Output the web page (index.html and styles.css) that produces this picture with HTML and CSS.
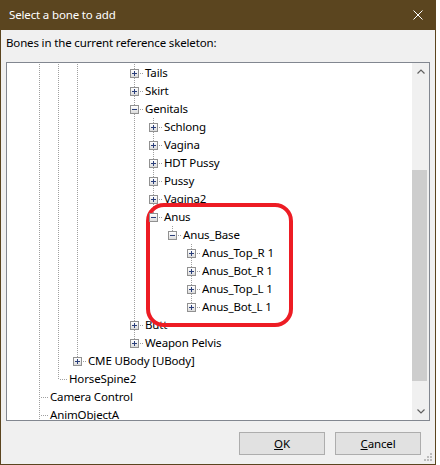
FILE: index.html
```html
<!DOCTYPE html>
<html lang="en">
<head>
  <meta charset="UTF-8">
  <title>Select a bone to add</title>
  <link rel="stylesheet" href="styles.css">
</head>
<body>
  <div class="dialog">
    <div class="titlebar">
      <span class="title">Select a bone to add</span>
      <span class="close">
        <svg width="10" height="10" viewBox="0 0 10 10"><path d="M0.5 0.5 L9.5 9.5 M9.5 0.5 L0.5 9.5" stroke="#fff" stroke-width="1" fill="none"/></svg>
      </span>
    </div>

    <div class="client">
      <div class="caption">Bones in the current reference skeleton:</div>

      <div class="tree">
        <div class="tree-rows">
          <!-- guides: one cell per ancestor level, "line" where that level still has siblings below -->
          <div class="row"><span class="guide line"></span><span class="guide line"></span><span class="guide line"></span><span class="guide"></span><span class="guide"></span><span class="node"><i class="box plus"></i></span><span class="label">Tails</span></div>
          <div class="row"><span class="guide line"></span><span class="guide line"></span><span class="guide line"></span><span class="guide"></span><span class="guide"></span><span class="node"><i class="box plus"></i></span><span class="label">Skirt</span></div>
          <div class="row"><span class="guide line"></span><span class="guide line"></span><span class="guide line"></span><span class="guide"></span><span class="guide"></span><span class="node"><i class="box"></i></span><span class="label">Genitals</span></div>
          <div class="row"><span class="guide line"></span><span class="guide line"></span><span class="guide line"></span><span class="guide"></span><span class="guide"></span><span class="guide line"></span><span class="node"><i class="box plus"></i></span><span class="label">Schlong</span></div>
          <div class="row"><span class="guide line"></span><span class="guide line"></span><span class="guide line"></span><span class="guide"></span><span class="guide"></span><span class="guide line"></span><span class="node"><i class="box plus"></i></span><span class="label">Vagina</span></div>
          <div class="row"><span class="guide line"></span><span class="guide line"></span><span class="guide line"></span><span class="guide"></span><span class="guide"></span><span class="guide line"></span><span class="node"><i class="box plus"></i></span><span class="label">HDT Pussy</span></div>
          <div class="row"><span class="guide line"></span><span class="guide line"></span><span class="guide line"></span><span class="guide"></span><span class="guide"></span><span class="guide line"></span><span class="node"><i class="box plus"></i></span><span class="label">Pussy</span></div>
          <div class="row"><span class="guide line"></span><span class="guide line"></span><span class="guide line"></span><span class="guide"></span><span class="guide"></span><span class="guide line"></span><span class="node"><i class="box plus"></i></span><span class="label">Vagina2</span></div>
          <div class="row"><span class="guide line"></span><span class="guide line"></span><span class="guide line"></span><span class="guide"></span><span class="guide"></span><span class="guide line"></span><span class="node last"><i class="box"></i></span><span class="label">Anus</span></div>
          <div class="row"><span class="guide line"></span><span class="guide line"></span><span class="guide line"></span><span class="guide"></span><span class="guide"></span><span class="guide line"></span><span class="guide"></span><span class="node last"><i class="box"></i></span><span class="label">Anus_Base</span></div>
          <div class="row"><span class="guide line"></span><span class="guide line"></span><span class="guide line"></span><span class="guide"></span><span class="guide"></span><span class="guide line"></span><span class="guide"></span><span class="guide"></span><span class="node"><i class="box plus"></i></span><span class="label">Anus_Top_R 1</span></div>
          <div class="row"><span class="guide line"></span><span class="guide line"></span><span class="guide line"></span><span class="guide"></span><span class="guide"></span><span class="guide line"></span><span class="guide"></span><span class="guide"></span><span class="node"><i class="box plus"></i></span><span class="label">Anus_Bot_R 1</span></div>
          <div class="row"><span class="guide line"></span><span class="guide line"></span><span class="guide line"></span><span class="guide"></span><span class="guide"></span><span class="guide line"></span><span class="guide"></span><span class="guide"></span><span class="node"><i class="box plus"></i></span><span class="label">Anus_Top_L 1</span></div>
          <div class="row"><span class="guide line"></span><span class="guide line"></span><span class="guide line"></span><span class="guide"></span><span class="guide"></span><span class="guide line"></span><span class="guide"></span><span class="guide"></span><span class="node last"><i class="box plus"></i></span><span class="label">Anus_Bot_L 1</span></div>
          <div class="row"><span class="guide line"></span><span class="guide line"></span><span class="guide line"></span><span class="guide"></span><span class="guide"></span><span class="node"><i class="box plus"></i></span><span class="label">Butt</span></div>
          <div class="row"><span class="guide line"></span><span class="guide line"></span><span class="guide line"></span><span class="guide"></span><span class="guide"></span><span class="node last"><i class="box plus"></i></span><span class="label">Weapon Pelvis</span></div>
          <div class="row"><span class="guide line"></span><span class="guide line"></span><span class="node last"><i class="box plus"></i></span><span class="label">CME UBody [UBody]</span></div>
          <div class="row"><span class="guide line"></span><span class="node last"></span><span class="label">HorseSpine2</span></div>
          <div class="row"><span class="node"></span><span class="label">Camera Control</span></div>
          <div class="row"><span class="node"></span><span class="label">AnimObjectA</span></div>
        </div>

        <div class="scrollbar">
          <div class="sb-btn">
            <svg width="8" height="5" viewBox="0 0 8 5"><path d="M0.5 4.5 L4 1 L7.5 4.5" stroke="#606060" stroke-width="1.2" fill="none"/></svg>
          </div>
          <div class="sb-track"><div class="sb-thumb"></div></div>
          <div class="sb-btn">
            <svg width="8" height="5" viewBox="0 0 8 5"><path d="M0.5 0.5 L4 4 L7.5 0.5" stroke="#606060" stroke-width="1.2" fill="none"/></svg>
          </div>
        </div>

        <!-- red marker round the Anus branch -->
        <div class="marker"></div>
      </div>

      <div class="buttons">
        <button class="btn"><u>O</u>K</button>
        <button class="btn"><u>C</u>ancel</button>
      </div>
    </div>

    <svg class="grip" width="9" height="9" viewBox="0 0 9 9">
      <rect x="6" y="0" width="2" height="2" fill="#bcbcbc"/>
      <rect x="3" y="3" width="2" height="2" fill="#bcbcbc"/>
      <rect x="6" y="3" width="2" height="2" fill="#bcbcbc"/>
      <rect x="0" y="6" width="2" height="2" fill="#bcbcbc"/>
      <rect x="3" y="6" width="2" height="2" fill="#bcbcbc"/>
      <rect x="6" y="6" width="2" height="2" fill="#bcbcbc"/>
    </svg>
  </div>
</body>
</html>
```

FILE: styles.css
```css
html, body {
  margin: 0;
  padding: 0;
  background: #fff;
}
body {
  width: 440px;
  height: 465px;
  font-family: 'Noto Sans', 'Open Sans', sans-serif;
  font-size: 11.5px;
  letter-spacing: -0.15px;
  color: #000;
}
.dialog {
  position: relative;
  width: 436px;
  height: 465px;
  box-sizing: border-box;
  border: 1px solid #5b451f;
  border-top: none;
  background: #f0f0f0;
  display: flex;
  flex-direction: column;
}
.titlebar {
  height: 30px;
  flex: none;
  background: #5b451f;
  color: #fff;
  display: flex;
  align-items: center;
  padding-left: 8px;
}
.title {
  flex: 1;
  line-height: 16px;
}
.close {
  width: 34px;
  height: 30px;
  display: flex;
  align-items: center;
  justify-content: center;
}
.client {
  flex: 1;
  padding: 0 5px;
  display: flex;
  flex-direction: column;
}
.caption {
  padding-top: 5px;
  line-height: 16px;
  margin-bottom: 11px;
}

/* tree view */
.tree {
  position: relative;
  height: 359px;
  box-sizing: border-box;
  border: 1px solid #828790;
  background: #fff;
  display: flex;
  overflow: hidden;
}
.tree-rows {
  flex: 1;
  padding-top: 1px;
  padding-left: 23px;
  overflow: hidden;
}
.row {
  display: flex;
  height: 18px;
  line-height: 18px;
  white-space: nowrap;
}
.guide, .node {
  position: relative;
  flex: none;
  width: 19px;
}
.guide.line::before,
.node::before {
  content: "";
  position: absolute;
  left: 9px;
  top: 0;
  width: 1px;
  height: 18px;
  background: repeating-linear-gradient(to bottom, #a0a0a0 0 1px, transparent 1px 2px);
}
.node.last::before {
  height: 10px;
}
.node::after {
  content: "";
  position: absolute;
  left: 10px;
  top: 9px;
  width: 9px;
  height: 1px;
  background: repeating-linear-gradient(to right, transparent 0 1px, #a0a0a0 1px 2px);
}
.box {
  position: absolute;
  z-index: 1;
  left: 5px;
  top: 5px;
  width: 9px;
  height: 9px;
  box-sizing: border-box;
  border: 1px solid #919191;
  background: linear-gradient(#ffffff, #dcdcdc);
}
.box::before {
  content: "";
  position: absolute;
  left: 1px;
  top: 3px;
  width: 5px;
  height: 1px;
  background: #2b3f7a;
}
.box.plus::after {
  content: "";
  position: absolute;
  left: 3px;
  top: 1px;
  width: 1px;
  height: 5px;
  background: #2b3f7a;
}
.label {
  padding-left: 1px;
}

/* vertical scrollbar */
.scrollbar {
  width: 17px;
  flex: none;
  background: #f0f0f0;
  display: flex;
  flex-direction: column;
}
.sb-btn {
  height: 17px;
  display: flex;
  align-items: center;
  justify-content: center;
}
.sb-track {
  flex: 1;
  padding-top: 90px;
}
.sb-thumb {
  height: 211px;
  width: 15px;
  background: #cdcdcd;
}

.marker {
  position: absolute;
  left: 139px;
  top: 140px;
  width: 147px;
  height: 124px;
  box-sizing: border-box;
  border: 4px solid #ed1c24;
  border-radius: 18px;
}

/* dialog buttons */
.buttons {
  display: flex;
  justify-content: flex-end;
  gap: 10px;
  padding: 11px 9px 0 0;
}
.btn {
  width: 86px;
  height: 23px;
  box-sizing: border-box;
  border: 1px solid #adadad;
  background: #e1e1e1;
  font-family: inherit;
  font-size: 11.5px;
  letter-spacing: -0.15px;
  color: #000;
  padding: 0;
}
.grip {
  position: absolute;
  right: 2px;
  bottom: 2px;
}
```
